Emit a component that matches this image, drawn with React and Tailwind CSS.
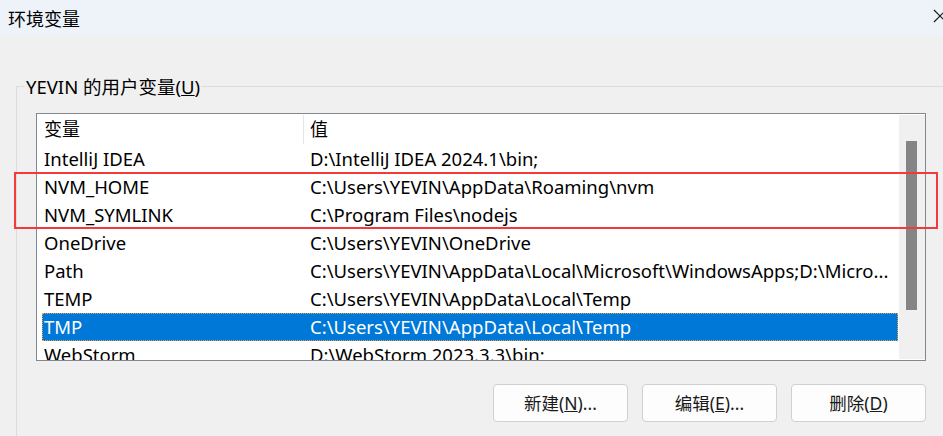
const rows = [
  { name: 'IntelliJ IDEA', value: 'D:\\IntelliJ IDEA 2024.1\\bin;' },
  { name: 'NVM_HOME', value: 'C:\\Users\\YEVIN\\AppData\\Roaming\\nvm' },
  { name: 'NVM_SYMLINK', value: 'C:\\Program Files\\nodejs' },
  { name: 'OneDrive', value: 'C:\\Users\\YEVIN\\OneDrive' },
  { name: 'Path', value: 'C:\\Users\\YEVIN\\AppData\\Local\\Microsoft\\WindowsApps;D:\\Micro...' },
  { name: 'TEMP', value: 'C:\\Users\\YEVIN\\AppData\\Local\\Temp' },
  { name: 'TMP', value: 'C:\\Users\\YEVIN\\AppData\\Local\\Temp', selected: true },
  { name: 'WebStorm', value: 'D:\\WebStorm 2023.3.3\\bin;' },
];

const font = "font-['Noto_Sans','Noto_Sans_CJK_SC',sans-serif]";

const DialogButton = ({ label, hotkey, dots }) => (
  <button className="w-[135px] h-[38px] bg-[#fdfdfd] border border-[#d0d0d0] rounded-[4px] text-[17.5px] text-[#1a1a1a] flex items-center justify-center">
    {label}(<span className="underline">{hotkey}</span>){dots ? '...' : ''}
  </button>
);

export default function App() {
  return (
    <div className={`relative w-[943px] h-[436px] overflow-hidden bg-[#f0f0f0] text-[#000] ${font}`}>
      {/* Title bar */}
      <div className="h-[37px] bg-[#eef3f9] flex items-center justify-between pl-[8px]">
        <span className="text-[18px] leading-none">环境变量</span>
        <svg width="16" height="16" viewBox="0 0 16 16" className="-mr-[5px] -mt-[6px]">
          <path d="M2 2 L14 14 M14 2 L2 14" stroke="#1a1a1a" strokeWidth="1.2" fill="none" />
        </svg>
      </div>

      {/* Group box */}
      <div className="mt-[49px] ml-[16px] border-t border-l border-[#dcdcdc] h-[400px]">
        <div className="-mt-[12px] ml-[8px] px-[1px] w-fit bg-[#f0f0f0] text-[18.5px] leading-[24px]">
          YEVIN 的用户变量(<span className="underline">U</span>)
        </div>

        {/* List box */}
        <div className="mt-[14px] ml-[19px] w-[890px] h-[248px] border border-[#828790] bg-white flex overflow-hidden">
          <div className="flex-1 flex flex-col text-[18.5px]">
            <div className="h-[31px] flex items-center shrink-0">
              <div className="w-[266px] pl-[7px] h-full flex items-center text-[18px]">变量</div>
              <div className="w-px h-[29px] mt-px self-start bg-[#e5e5e5]" />
              <div className="pl-[6px] text-[18px]">值</div>
            </div>
            {rows.map((row) => (
              <div
                key={row.name}
                className={`ml-[5px] w-[856px] h-[28px] shrink-0 flex items-center ${
                  row.selected ? 'bg-[#0078d7] text-white outline outline-1 outline-dotted outline-[#f0a040] -outline-offset-1' : ''
                }`}
              >
                <div className="w-[268px] pl-[2px] whitespace-nowrap">{row.name}</div>
                <div className="w-[580px] whitespace-nowrap">{row.value}</div>
              </div>
            ))}
          </div>
          {/* Scrollbar */}
          <div className="w-[26px] my-px bg-[#f0f0f0] shrink-0">
            <div className="ml-[7px] mt-[26px] w-[11px] h-[169px] bg-[#858585]" />
          </div>
        </div>

        {/* Buttons */}
        <div className="mt-[23px] ml-[476px] flex gap-[14px]">
          <DialogButton label="新建" hotkey="N" dots />
          <DialogButton label="编辑" hotkey="E" dots />
          <DialogButton label="删除" hotkey="D" />
        </div>
      </div>

      {/* Red highlight annotation */}
      <div className="absolute left-[14px] top-[172px] w-[924px] h-[57px] border-2 border-[#f23a3a]" />
    </div>
  );
}
